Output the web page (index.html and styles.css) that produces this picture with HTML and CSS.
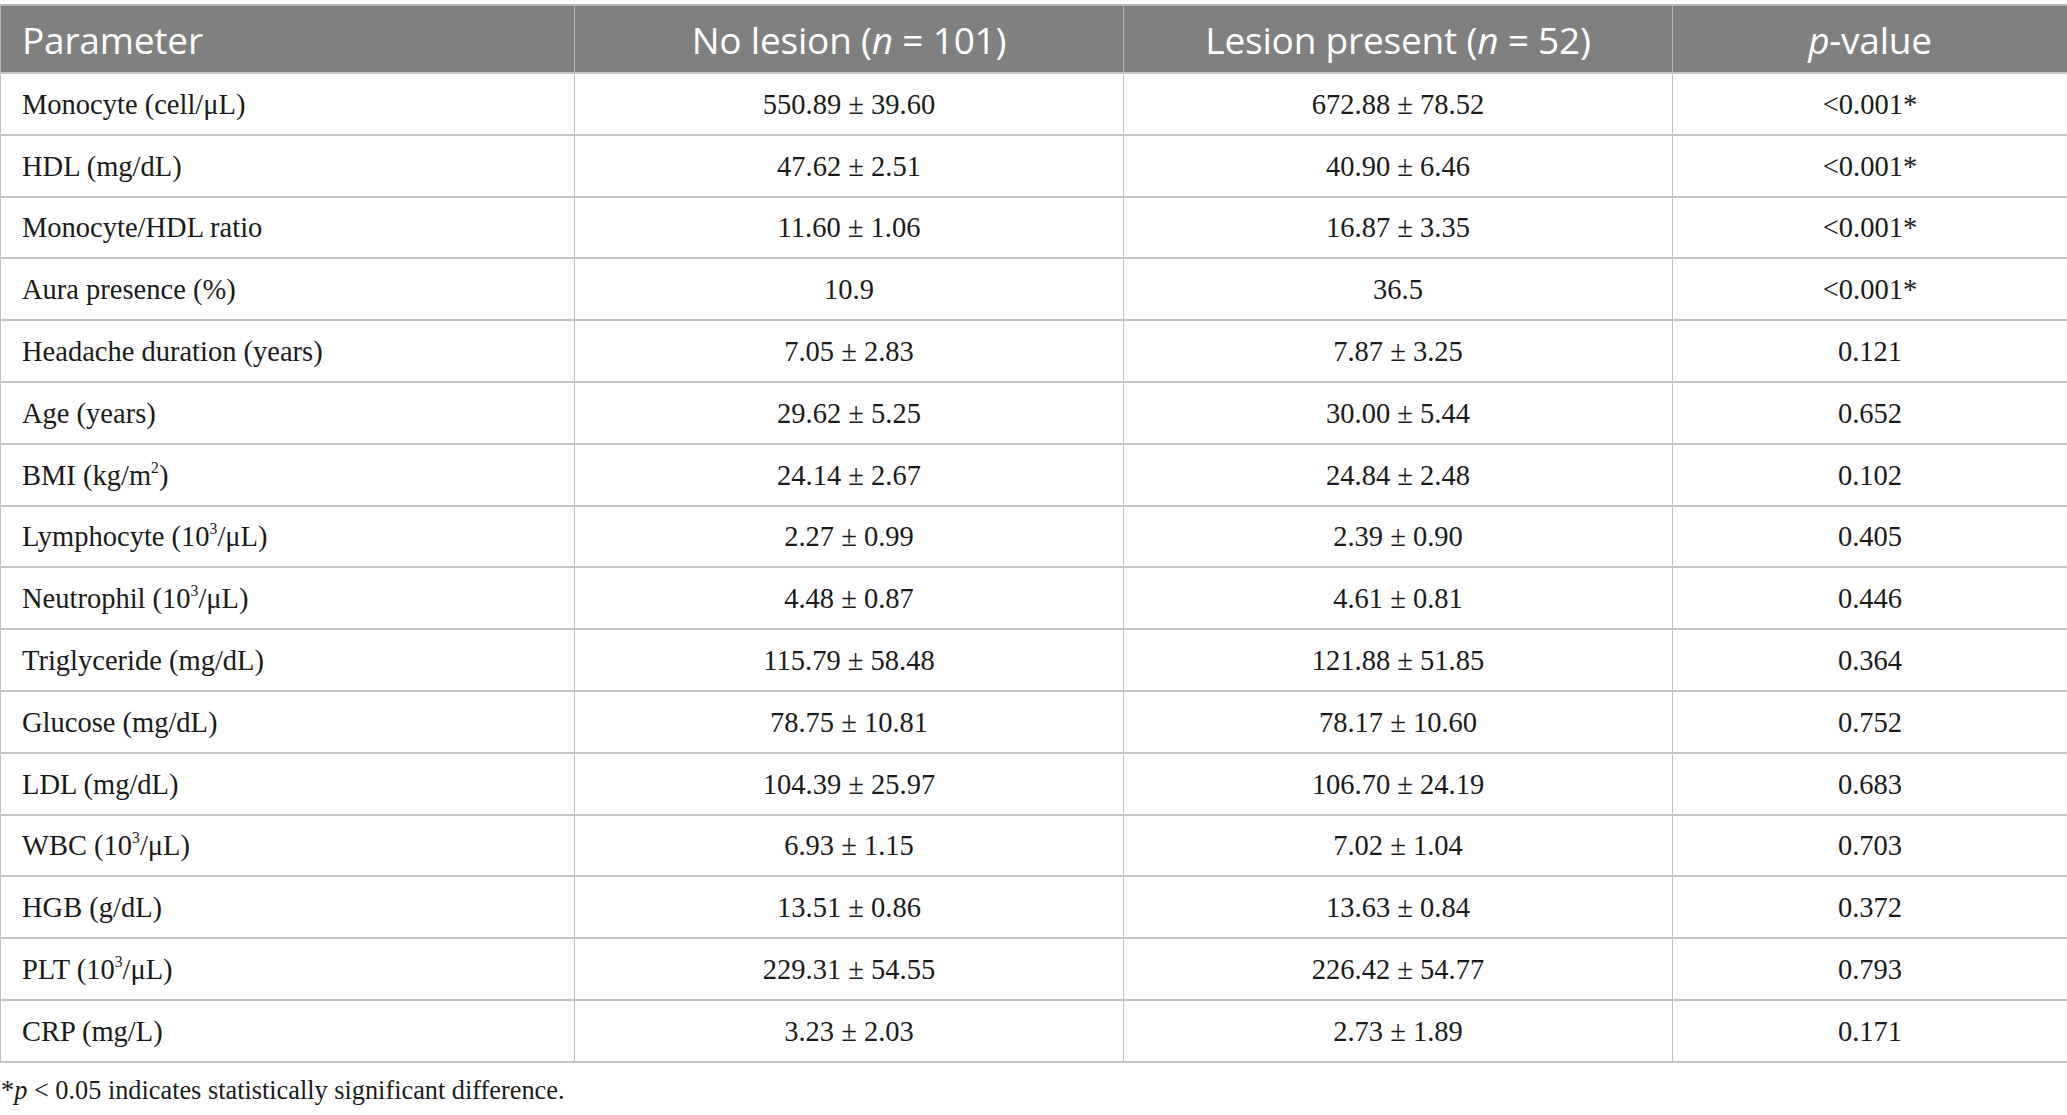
FILE: index.html
```html
<!DOCTYPE html>
<html>
<head>
<meta charset="utf-8">
<link rel="stylesheet" href="styles.css">
</head>
<body>
<table class="data">
  <colgroup>
    <col class="c1"><col class="c2"><col class="c3"><col class="c4">
  </colgroup>
  <thead>
    <tr>
      <th class="left">Parameter</th>
      <th>No lesion (<i>n</i> = 101)</th>
      <th>Lesion present (<i>n</i> = 52)</th>
      <th><i>p</i>-value</th>
    </tr>
  </thead>
  <tbody>
    <tr><td class="left">Monocyte (cell/μL)</td><td>550.89 ± 39.60</td><td>672.88 ± 78.52</td><td>&lt;0.001*</td></tr>
    <tr><td class="left">HDL (mg/dL)</td><td>47.62 ± 2.51</td><td>40.90 ± 6.46</td><td>&lt;0.001*</td></tr>
    <tr><td class="left">Monocyte/HDL ratio</td><td>11.60 ± 1.06</td><td>16.87 ± 3.35</td><td>&lt;0.001*</td></tr>
    <tr><td class="left">Aura presence (%)</td><td>10.9</td><td>36.5</td><td>&lt;0.001*</td></tr>
    <tr><td class="left">Headache duration (years)</td><td>7.05 ± 2.83</td><td>7.87 ± 3.25</td><td>0.121</td></tr>
    <tr><td class="left">Age (years)</td><td>29.62 ± 5.25</td><td>30.00 ± 5.44</td><td>0.652</td></tr>
    <tr><td class="left">BMI (kg/m<sup>2</sup>)</td><td>24.14 ± 2.67</td><td>24.84 ± 2.48</td><td>0.102</td></tr>
    <tr><td class="left">Lymphocyte (10<sup>3</sup>/μL)</td><td>2.27 ± 0.99</td><td>2.39 ± 0.90</td><td>0.405</td></tr>
    <tr><td class="left">Neutrophil (10<sup>3</sup>/μL)</td><td>4.48 ± 0.87</td><td>4.61 ± 0.81</td><td>0.446</td></tr>
    <tr><td class="left">Triglyceride (mg/dL)</td><td>115.79 ± 58.48</td><td>121.88 ± 51.85</td><td>0.364</td></tr>
    <tr><td class="left">Glucose (mg/dL)</td><td>78.75 ± 10.81</td><td>78.17 ± 10.60</td><td>0.752</td></tr>
    <tr><td class="left">LDL (mg/dL)</td><td>104.39 ± 25.97</td><td>106.70 ± 24.19</td><td>0.683</td></tr>
    <tr><td class="left">WBC (10<sup>3</sup>/μL)</td><td>6.93 ± 1.15</td><td>7.02 ± 1.04</td><td>0.703</td></tr>
    <tr><td class="left">HGB (g/dL)</td><td>13.51 ± 0.86</td><td>13.63 ± 0.84</td><td>0.372</td></tr>
    <tr><td class="left">PLT (10<sup>3</sup>/μL)</td><td>229.31 ± 54.55</td><td>226.42 ± 54.77</td><td>0.793</td></tr>
    <tr><td class="left">CRP (mg/L)</td><td>3.23 ± 2.03</td><td>2.73 ± 1.89</td><td>0.171</td></tr>
  </tbody>
</table>
<p class="note">*<i>p</i> &lt; 0.05 indicates statistically significant difference.</p>
</body>
</html>
```

FILE: styles.css
```css
html, body {
  margin: 0;
  padding: 0;
  background: #ffffff;
}
body {
  padding-top: 4px;
}
.data {
  width: 2067px;
  border-collapse: collapse;
  table-layout: fixed;
}
.c1 { width: 574px; }
.c2 { width: 549px; }
.c3 { width: 549px; }
.c4 { width: 395px; }
.data th {
  background: #808080;
  color: #ffffff;
  font-family: "Open Sans", "Noto Sans", sans-serif;
  font-weight: normal;
  font-size: 37px;
  letter-spacing: -0.2px;
  height: 66px;
  padding: 0 10px;
  text-align: center;
  vertical-align: middle;
  border-top: 2px solid #b4b4b4;
  border-left: 1px solid #b8b8b8;
  border-right: 1px solid #b8b8b8;
  border-bottom: 2px solid #c4c4c4;
  white-space: nowrap;
}
.data th i {
  font-style: italic;
}
.data td {
  font-family: "Liberation Serif", "Times New Roman", serif;
  font-size: 28.5px;
  color: #1a1a1a;
  height: 57.8px;
  padding: 2px 10px 0;
  text-align: center;
  vertical-align: middle;
  border: 1px solid #bcbcbc;
  border-top: 2px solid #c4c4c4;
  border-bottom: 2px solid #c4c4c4;
  white-space: nowrap;
}
.data th.left, .data td.left {
  text-align: left;
  padding-left: 21px;
}
.data sup {
  font-size: 0.55em;
  vertical-align: 0.75em;
  line-height: 0;
}
.note {
  margin: 13px 0 0 1px;
  font-family: "Liberation Serif", "Times New Roman", serif;
  font-size: 26.3px;
  color: #1a1a1a;
}
```
